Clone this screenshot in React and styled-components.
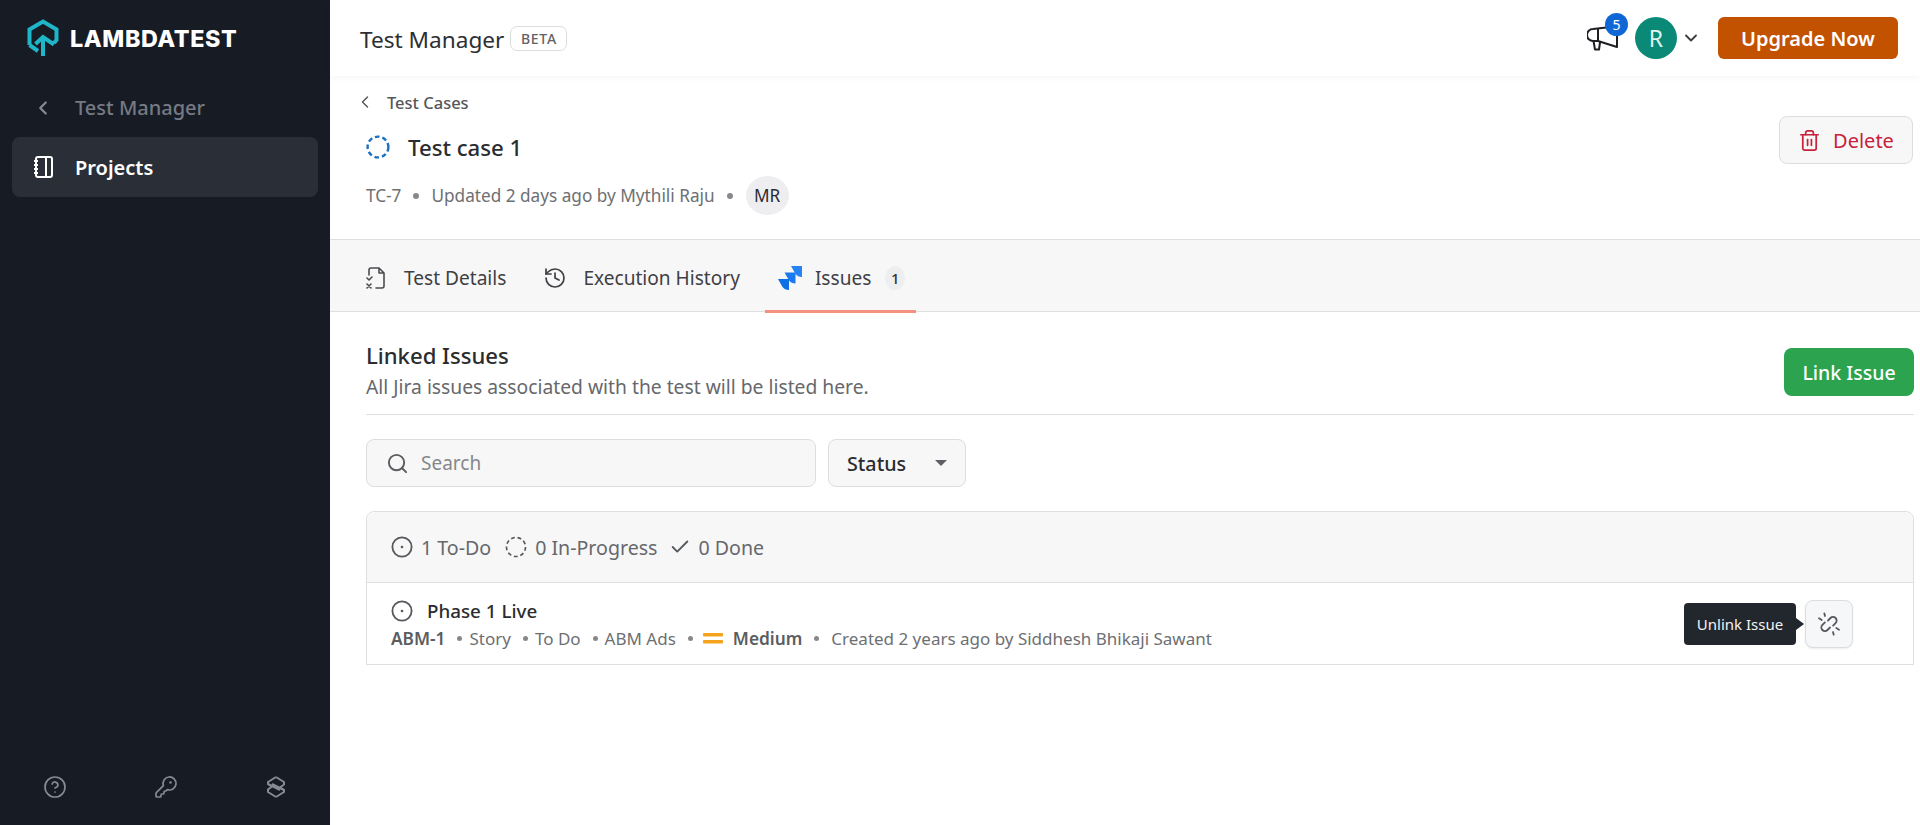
import React from "react";
import styled, { createGlobalStyle } from "styled-components";
import { ChevronLeft, ChevronDown, Trash2, Search as SearchIcon, History, Check, CircleHelp, KeyRound } from "lucide-react";

const Global = createGlobalStyle`
  html, body { margin: 0; padding: 0; height: 100%; background: #fff; }
  body { font-family: "Noto Sans", "Open Sans", sans-serif; color: #2b2d31; }
  #root { height: 825px; }
  * { box-sizing: border-box; }
`;

const Shell = styled.div`display: flex; width: 1920px; height: 825px; overflow: hidden;`;
const Sidebar = styled.aside`width: 330px; flex: none; background: #171b24; display: flex; flex-direction: column;`;
const Brand = styled.div`height: 76px; display: flex; align-items: center; gap: 10px; padding: 0 0 0 27px;`;
const BrandName = styled.span`font-family: "Inter", "Liberation Sans", sans-serif; font-weight: 800; font-size: 23.3px; letter-spacing: 0.6px; color: #fff;`;
const NavBack = styled.div`height: 61px; display: flex; align-items: center; padding: 2px 0 0 32px; gap: 21px; color: #757a84; font-size: 20px; font-weight: 500;`;
const NavItem = styled.div`margin: 0 12px; height: 60px; border-radius: 8px; background: #2a2f37; display: flex; align-items: center; padding-left: 21px; gap: 22px; color: #fff; font-size: 20px; font-weight: 600;`;
const SideFoot = styled.div`margin-top: auto; height: 76px; display: grid; grid-template-columns: 110px 111px 110px; align-items: center; color: #858a93; justify-items: center;`;

const Main = styled.main`flex: 1; min-width: 0; display: flex; flex-direction: column;`;
const Header = styled.header`height: 76px; flex: none; display: flex; align-items: center; padding: 2px 22px 0 30px; box-shadow: 0 3px 6px rgba(0,0,0,.03);`;
const HeaderTitle = styled.h1`margin: 0; font-size: 22.6px; font-weight: 400; color: #2d2f33;`;
const Beta = styled.span`margin-left: 6px; margin-top: -2px; height: 25px; width: 57px; border: 1px solid #dcdde0; border-radius: 7px; display: flex; align-items: center; justify-content: center; font-size: 14px; font-weight: 500; letter-spacing: 0.7px; color: #5f6165;`;
const HeaderRight = styled.div`margin-left: auto; margin-top: -2px; display: flex; align-items: center;`;
const Announce = styled.div`position: relative; width: 48px; height: 41px; display: flex; align-items: center; color: #1d1f22;`;
const Badge = styled.span`position: absolute; left: 18px; top: -5px; width: 23px; height: 23px; border-radius: 50%; background: #0f67d6; color: #fff; font-size: 14px; display: flex; align-items: center; justify-content: center;`;
const Avatar = styled.div`width: 42px; height: 42px; border-radius: 50%; background: #0a8a76; color: #dff5f0; font-size: 23px; display: flex; align-items: center; justify-content: center;`;
const Upgrade = styled.button`margin-left: 17px; width: 180px; height: 42px; border: 0; border-radius: 6px; background: #c25200; color: #fff; font: 600 20px "Noto Sans", sans-serif;`;
const Caret = styled.span`display: flex; margin-left: 4px; color: #3a3c40;`;

const Top = styled.section`height: 164px; flex: none; position: relative; padding: 15px 0 0 30px; border-bottom: 1px solid #dddfe2;`;
const Crumb = styled.div`display: flex; align-items: center; gap: 12px; height: 22px; font-size: 16.5px; font-weight: 500; color: #55575b; margin-left: -5px;`;
const TitleRow = styled.div`display: flex; align-items: center; gap: 18px; margin: 17px 0 0 6px; height: 34px;`;
const Title = styled.h2`margin: 0; font-size: 22.2px; font-weight: 500; color: #2a2c30;`;
const Meta = styled.div`display: flex; align-items: center; margin: 12px 0 0 6px; height: 39px; font-size: 17.2px; color: #6d6f73;`;
const Dot = styled.span`width: 6px; height: 6px; border-radius: 50%; background: #86888c; margin: 0 12px;`;
const Initials = styled.span`width: 43px; height: 39px; border-radius: 50%; background: #eeeef1; color: #2a2c30; font-size: 17.2px; display: flex; align-items: center; justify-content: center; margin-left: 1px;`;
const Delete = styled.button`position: absolute; right: 7px; top: 40px; width: 134px; height: 48px; border: 1px solid #dcdde0; border-radius: 8px; background: #f7f7f8; color: #c8213b; font: 400 20px "Noto Sans", sans-serif; display: flex; align-items: center; justify-content: center; gap: 12px;`;

const Tabs = styled.nav`height: 72px; flex: none; background: #f7f7f7; border-bottom: 1px solid #dddfe2; display: flex; padding-left: 24px;`;
const Tab = styled.div`height: 72px; padding: 3px ${p => p.$pr || 12}px 0 12px; display: flex; align-items: center; gap: ${p => p.$gap || 18}px; font-size: 19.1px; color: #3e4044; position: relative; margin-right: ${p => p.$mr || 0}px;
  ${p => p.$active && `&::after { content: ""; position: absolute; left: 0; right: 0; bottom: -1px; height: 3px; background: #f4907e; }`}`;
const Count = styled.span`width: 20px; height: 24px; margin-left: -4px; border-radius: 50%; background: #eceef0; font-size: 15px; font-weight: 500; color: #333; display: flex; align-items: center; justify-content: center;`;

const Body = styled.section`padding: 0 6px 0 36px;`;
const IssuesHead = styled.div`height: 103px; border-bottom: 1px solid #dddfe2; display: flex; justify-content: space-between; align-items: flex-start; padding-top: 28px;`;
const H3 = styled.h3`margin: 0; font-size: 22.1px; line-height: 30px; font-weight: 500; color: #2a2c30;`;
const Sub = styled.p`margin: 4px 0 0; font-size: 19.27px; line-height: 26px; color: #66686c;`;
const LinkBtn = styled.button`width: 130px; height: 48px; margin-top: 8px; border: 0; border-radius: 8px; background: #2ba34f; color: #fff; font: 500 19.5px "Noto Sans", sans-serif;`;
const Filters = styled.div`display: flex; gap: 12px; margin-top: 24px;`;
const SearchBox = styled.div`width: 450px; height: 48px; border: 1px solid #dcdde0; border-radius: 8px; background: #f7f7f7; display: flex; align-items: center; gap: 12px; padding-left: 19px; color: #85878b; font-size: 19px;`;
const StatusBox = styled.div`width: 138px; height: 48px; border: 1px solid #dcdde0; border-radius: 8px; background: #f7f7f7; display: flex; align-items: center; justify-content: space-between; padding: 0 18px; font-size: 19.7px; font-weight: 500; color: #2a2c30;`;
const Arrow = styled.span`width: 0; height: 0; border-left: 6px solid transparent; border-right: 6px solid transparent; border-top: 6px solid #5d6064;`;
const Card = styled.div`margin-top: 24px; border: 1px solid #dddfe2; border-radius: 8px 8px 0 0;`;
const CardHead = styled.div`height: 71px; background: #f7f7f7; border-bottom: 1px solid #dddfe2; border-radius: 8px 8px 0 0; display: flex; align-items: center; padding-left: 24px; font-size: 19.6px; color: #66686c; gap: 6px;`;
const Stat = styled.span`display: flex; align-items: center; gap: 8px; margin-right: ${p => p.$mr || 0}px;`;
const Row = styled.div`height: 81px; position: relative; padding: 14px 0 0 24px;`;
const RowTitle = styled.div`display: flex; align-items: center; gap: 14px; height: 28px; font-size: 18.8px; font-weight: 500; color: #2a2c30;`;
const RowMeta = styled.div`display: flex; align-items: center; height: 26px; font-size: 17px; color: #6d6f73;`;
const Strong = styled.b`font-weight: 600; font-size: 17.3px; color: #5b5d61;`;
const Small = styled.span`width: 5px; height: 5px; border-radius: 50%; background: #888; margin: 0 ${p => p.$r || 7}px 0 ${p => p.$l || 12}px;`;
const Tip = styled.div`position: absolute; right: 117px; top: 20px; width: 112px; height: 42px; border-radius: 4px; background: #22272e; color: #f3f3f3; font-size: 15px; display: flex; align-items: center; justify-content: center;
  &::after { content: ""; position: absolute; right: -8px; top: 15px; border-left: 8px solid #22272e; border-top: 6px solid transparent; border-bottom: 6px solid transparent; }`;
const IconBtn = styled.button`position: absolute; right: 60px; top: 17px; width: 48px; height: 48px; border: 1px solid #dcdde0; border-radius: 8px; background: #f6f7f8; color: #55585c; display: flex; align-items: center; justify-content: center; padding: 0; box-shadow: 0 1px 2px rgba(0,0,0,.08);`;

const Logo = () => (
  <svg width="33" height="38" viewBox="7 6 33 38" fill="none" stroke="#1fb6c9" strokeWidth="4" strokeLinejoin="miter">
    <path d="M9.5 32V16.5L23 8.5 36.5 16.5V27L34 30" />
    <path d="M9.5 32 18 38" />
    <path d="M23 43V24M15.5 31 23 24 34 31.5" />
  </svg>
);
const Notebook = () => (
  <svg width="20" height="22" viewBox="0 0 20 22" fill="none" stroke="#fff" strokeWidth="2">
    <rect x="3" y="1" width="16" height="20" rx="2" />
    <path d="M13 1v20M1 5h4M1 9h4M1 13h4M1 17h4" />
  </svg>
);
const Layers = () => (
  <svg width="22" height="24" viewBox="0 0 22 24" fill="none" stroke="#858a93" strokeWidth="2" strokeLinejoin="round">
    <path d="M11 2 3 7v2l12 6v0M11 22l8-5v-2L7 9" />
    <path d="M3 9l4 2.5L3 14.5V17l8 5M19 15l-4-2.5 4-3V7l-8-5" />
  </svg>
);
const Megaphone = () => (
  <svg width="32" height="28" viewBox="6 16 32 28" fill="none" stroke="currentColor" strokeWidth="2" strokeLinejoin="round" strokeLinecap="round">
    <path d="M36 22V39L17 33H12a6 6 0 0 1 0-12L30 19" />
    <path d="M17 21V33M12.5 33 14 41.5h4l1-7" />
  </svg>
);
const Dashed = ({ size = 24, color = "#1a6fc4", w = 2.4, dash = "4.6 3" }) => (
  <svg width={size} height={size} viewBox="0 0 24 24" fill="none">
    <circle cx="12" cy="12" r="10.4" stroke={color} strokeWidth={w} strokeDasharray={dash} />
  </svg>
);
const Target = () => (
  <svg width="22" height="22" viewBox="0 0 22 22" fill="none" stroke="#55585c" strokeWidth="1.8">
    <circle cx="11" cy="11" r="9.6" />
    <circle cx="11" cy="11" r="1.3" fill="#55585c" stroke="none" />
  </svg>
);
const TestDoc = () => (
  <svg width="20" height="24" viewBox="0 0 20 24" fill="none" stroke="#4a4c50" strokeWidth="1.6" strokeLinecap="round" strokeLinejoin="round">
    <path d="M3 9V4a2 2 0 0 1 2-2h8l5 5v13a2 2 0 0 1-2 2H10M13 2v5h5" />
    <path d="M1 12l2 2 3-3M1 18l4 4M5 18l-4 4" />
  </svg>
);
const Jira = () => (
  <svg width="26" height="26" viewBox="0 0 26 26" style={{ marginRight: -6 }}>
    <path d="M14 1h11v11c-3 0-5-1-6.5-3z" fill="#2583f2" />
    <path d="M7.5 7.5h11v11c-3 0-5-1-6.5-3z" fill="#1a7aee" />
    <path d="M1 14h11v11c-3 0-5-1-6.5-3z" fill="#0f6fe4" />
  </svg>
);
const Medium = () => (
  <svg width="20" height="12" viewBox="0 0 20 12" style={{ marginRight: 10 }}>
    <rect width="20" height="3.4" y="1" rx="1" fill="#f5a31f" />
    <rect width="20" height="3.4" y="8" rx="1" fill="#f5a31f" />
  </svg>
);
const BrokenLink = () => (
  <svg width="24" height="24" viewBox="0 0 24 24" fill="none" stroke="currentColor" strokeWidth="1.8" strokeLinecap="round">
    <path d="M11 8.5l2.5-2.5a3.6 3.6 0 0 1 5.1 5.1l-2.5 2.5" />
    <path d="M13 15.5l-2.5 2.5a3.6 3.6 0 0 1-5.1-5.1l2.5-2.5" />
    <path d="M2 6.3 4.7 8M7.3 1.3 8 4M19.3 16 22 17.7M16 20l.7 2.7" />
  </svg>
);

export default function App() {
  return (
    <Shell>
      <Global />
      <Sidebar>
        <Brand><Logo /><BrandName>LAMBDATEST</BrandName></Brand>
        <NavBack><ChevronLeft size={22} strokeWidth={2.4} color="#888c94" />Test Manager</NavBack>
        <NavItem><Notebook />Projects</NavItem>
        <SideFoot>
          <CircleHelp size={24} strokeWidth={1.7} />
          <KeyRound size={24} strokeWidth={1.7} />
          <Layers />
        </SideFoot>
      </Sidebar>
      <Main>
        <Header>
          <HeaderTitle>Test Manager</HeaderTitle>
          <Beta>BETA</Beta>
          <HeaderRight>
            <Announce><Megaphone /><Badge>5</Badge></Announce>
            <Avatar>R</Avatar>
            <Caret><ChevronDown size={20} strokeWidth={2.2} /></Caret>
            <Upgrade>Upgrade Now</Upgrade>
          </HeaderRight>
        </Header>
        <Top>
          <Crumb><ChevronLeft size={20} strokeWidth={1.7} />Test Cases</Crumb>
          <TitleRow><Dashed /><Title>Test case 1</Title></TitleRow>
          <Meta>
            TC-7<Dot />Updated 2 days ago by Mythili Raju<Dot /><Initials>MR</Initials>
          </Meta>
          <Delete><Trash2 size={23} strokeWidth={1.8} />Delete</Delete>
        </Top>
        <Tabs>
          <Tab $mr={13}><TestDoc />Test Details</Tab>
          <Tab $mr={13} $gap={16}><History size={24} strokeWidth={1.7} />Execution History</Tab>
          <Tab $active $pr={11} $gap={18}><Jira /><span>Issues</span><Count>1</Count></Tab>
        </Tabs>
        <Body>
          <IssuesHead>
            <div>
              <H3>Linked Issues</H3>
              <Sub>All Jira issues associated with the test will be listed here.</Sub>
            </div>
            <LinkBtn>Link Issue</LinkBtn>
          </IssuesHead>
          <Filters>
            <SearchBox><SearchIcon size={23} strokeWidth={2} color="#5a5c60" />Search</SearchBox>
            <StatusBox>Status<Arrow /></StatusBox>
          </Filters>
          <Card>
            <CardHead>
              <Stat $mr={8}><Target />1 To-Do</Stat>
              <Stat $mr={5}><Dashed size={22} color="#55585c" w={1.8} dash="4.2 3" />0 In-Progress</Stat>
              <Stat><Check size={22} strokeWidth={2} color="#55585c" />0 Done</Stat>
            </CardHead>
            <Row>
              <RowTitle><Target />Phase 1 Live</RowTitle>
              <RowMeta>
                <Strong>ABM-1</Strong><Small />Story<Small />To Do<Small />ABM Ads<Small $r={10} /><Medium /><Strong>Medium</Strong><Small $r={12} />Created 2 years ago by Siddhesh Bhikaji Sawant
              </RowMeta>
              <Tip>Unlink Issue</Tip>
              <IconBtn><BrokenLink /></IconBtn>
            </Row>
          </Card>
        </Body>
      </Main>
    </Shell>
  );
}
